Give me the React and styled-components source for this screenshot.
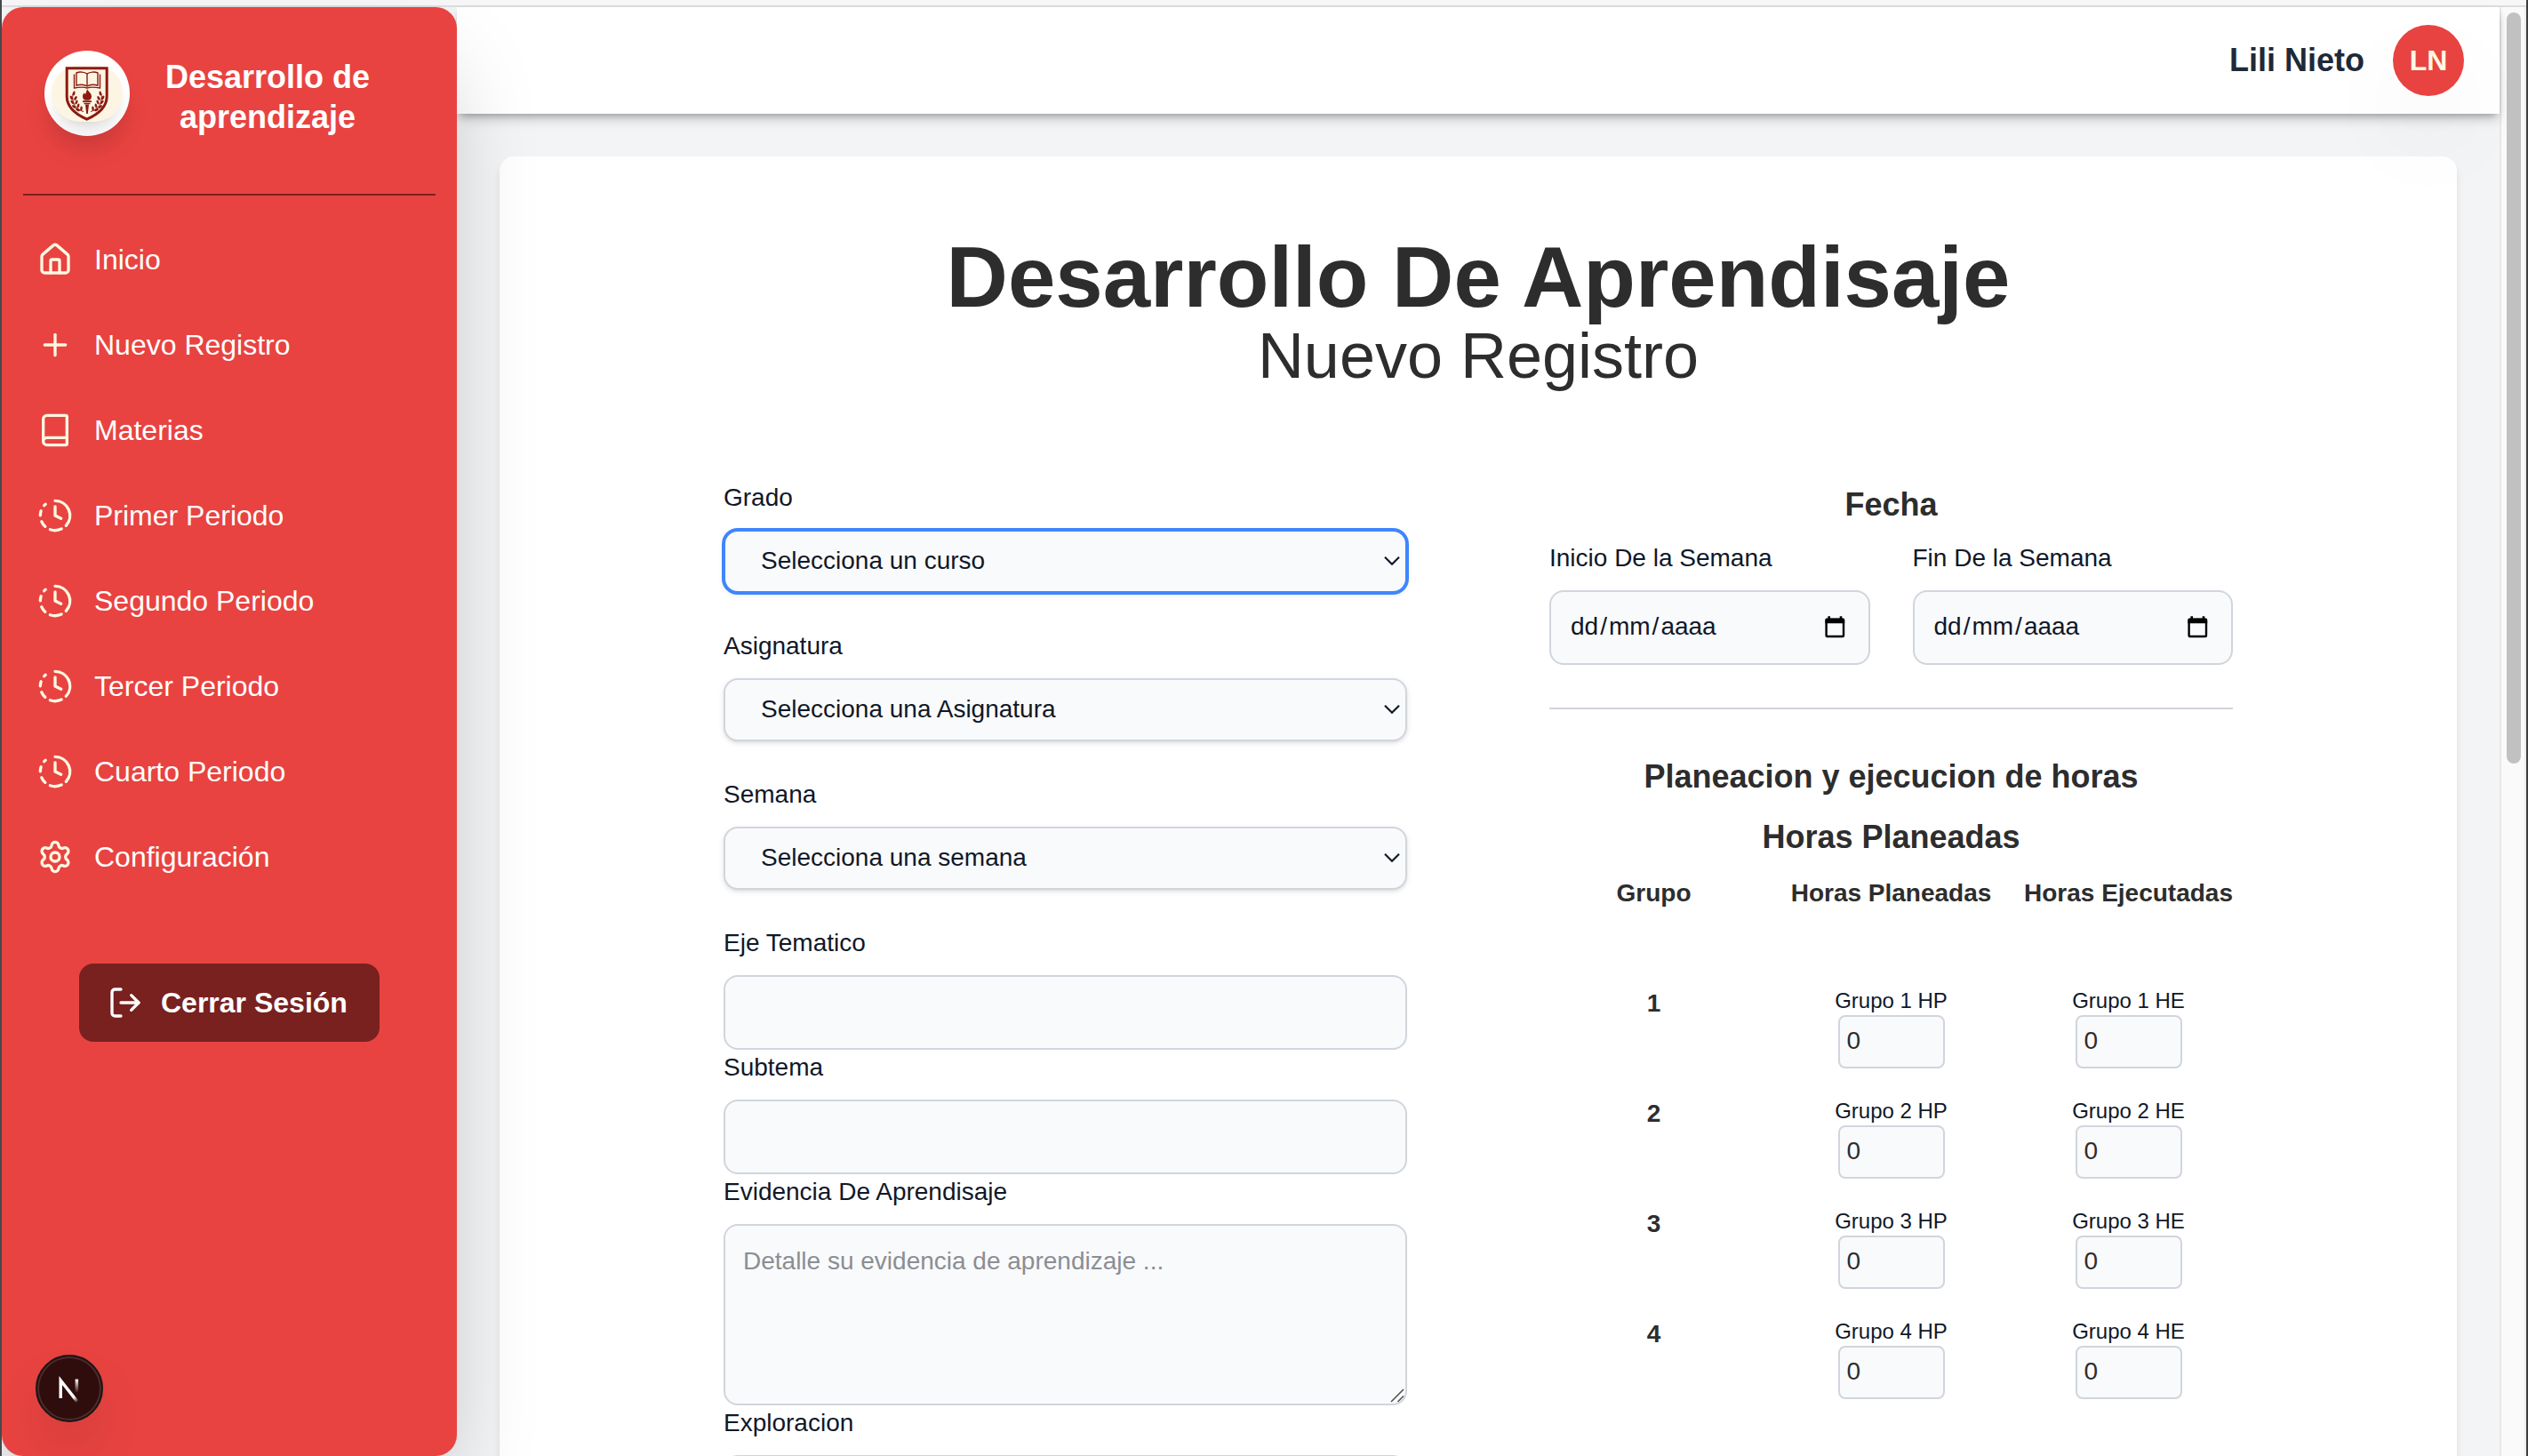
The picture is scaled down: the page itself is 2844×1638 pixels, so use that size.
import React from "react";
import styled, { createGlobalStyle } from "styled-components";
import { House, Plus, Book, ClockFading, Settings, LogOut } from "lucide-react";

const Global = createGlobalStyle`
  *, *::before, *::after { box-sizing: border-box; }
  html, body { margin: 0; padding: 0; }
  body {
    font-family: "Liberation Sans", Arial, Helvetica, sans-serif;
    color: #2d2d2d;
    background: #f3f4f6;
    overflow: hidden;
  }
  h1, h2, h3, p { margin: 0; }
  input, textarea, button { font-family: inherit; }
`;

const Window = styled.div`
  width: 2844px;
  height: 1638px;
  display: flex;
  flex-direction: column;
  overflow: hidden;
  border-left: 2px solid #47484a;
  border-right: 2px solid #3d3d40;
  background: #f3f4f6;
`;

const Toolbar = styled.div`
  flex: none;
  height: 8px;
  background: #f7f7f7;
  border-bottom: 2px solid #dddddd;
`;

const Viewport = styled.div`
  flex: 1;
  min-height: 0;
  display: flex;
`;

const Sidebar = styled.aside`
  position: relative;
  z-index: 3;
  flex: none;
  width: 512px;
  height: 1630px;
  border-radius: 24px;
  background: #e84341;
  box-shadow: 0 50px 100px -24px rgba(0, 0, 0, 0.25);
`;

const Brand = styled.div`
  display: flex;
  align-items: flex-start;
  height: 210px;
  margin: 0 24px;
  padding: 49px 0 0 24px;
`;

const BrandLogo = styled.div`
  flex: none;
  display: flex;
  align-items: center;
  justify-content: center;
  width: 96px;
  height: 96px;
  border-radius: 50%;
  background: #fff;
  box-shadow: 0 20px 30px -6px rgba(0, 0, 0, 0.1);
`;

const Crest = styled.div`
  display: flex;
  align-items: center;
  justify-content: center;
  width: 80px;
  height: 64px;
  border-radius: 32px;
  background: #fdf5e3;
  box-shadow: 0 20px 30px -6px rgba(0, 0, 0, 0.1), 0 8px 12px -8px rgba(0, 0, 0, 0.1);
`;

const BrandName = styled.h2`
  width: 262px;
  margin: 7px 0 0 24px;
  color: #fff;
  font-size: 36px;
  line-height: 45px;
  font-weight: 700;
  text-align: center;
`;

const SidebarRule = styled.div`
  height: 2px;
  margin: 0 24px;
  background: #7a211f;
`;

const Nav = styled.nav`
  display: flex;
  flex-direction: column;
  gap: 16px;
  padding: 32px 24px 0;
`;

const NavItem = styled.a`
  display: flex;
  align-items: center;
  gap: 24px;
  height: 80px;
  padding: 0 16px;
  color: #fff;
  font-size: 32px;
  line-height: 48px;
  svg { color: #fff8e1; }
`;

const LogoutButton = styled.button`
  display: flex;
  align-items: center;
  gap: 20px;
  width: 338px;
  height: 88px;
  margin: 80px auto 0;
  padding: 0 0 0 32px;
  border: 0;
  border-radius: 16px;
  background: #78211f;
  color: #fff;
  font-size: 32px;
  font-weight: 700;
`;

const DevBadge = styled.div`
  position: absolute;
  left: 38px;
  bottom: 38px;
  display: flex;
  align-items: center;
  justify-content: center;
  width: 76px;
  height: 76px;
  border-radius: 50%;
  background: #2e0d0c;
  border: 2px solid #1b1716;
  box-shadow: inset 0 0 0 2px #4e2b2b, 0 32px 64px -16px rgba(0, 0, 0, 0.24);
`;

const Main = styled.div`
  flex: 1;
  min-width: 0;
  display: flex;
  flex-direction: column;
  background: #f3f4f6;
`;

const Header = styled.header`
  position: relative;
  z-index: 2;
  flex: none;
  display: flex;
  align-items: center;
  justify-content: flex-end;
  gap: 32px;
  height: 120px;
  padding: 0 40px;
  background: #fff;
  box-shadow: 0 8px 12px -2px rgba(0, 0, 0, 0.2), 0 4px 8px -4px rgba(0, 0, 0, 0.3);
`;

const UserName = styled.span`
  color: #1e2939;
  font-size: 36px;
  line-height: 56px;
  font-weight: 700;
`;

const Avatar = styled.div`
  display: flex;
  align-items: center;
  justify-content: center;
  width: 80px;
  height: 80px;
  border-radius: 50%;
  background: #e84341;
  color: #fff8e1;
  font-size: 32px;
  font-weight: 700;
  box-shadow: 0 50px 100px -24px rgba(0, 0, 0, 0.25);
`;

const Page = styled.main`
  flex: 1;
  min-height: 0;
  overflow: hidden;
  padding: 48px 48px 0;
`;

const Card = styled.section`
  height: 1800px;
  padding: 88px 252px 0;
  border-radius: 16px;
  background: #fff;
  box-shadow: 0 8px 12px -2px rgba(0, 0, 0, 0.1), 0 4px 8px -4px rgba(0, 0, 0, 0.1);
`;

const Title = styled.h1`
  font-size: 96px;
  line-height: 96px;
  font-weight: 700;
  text-align: center;
  white-space: nowrap;
`;

const Subtitle = styled.p`
  margin-bottom: 100px;
  font-size: 72px;
  line-height: 80px;
  text-align: center;
`;

const Columns = styled.div`
  display: grid;
  grid-template-columns: 1fr 1fr;
  column-gap: 160px;
`;

const Column = styled.div`
  min-width: 0;
`;

const Label = styled.label`
  display: block;
  margin-bottom: 16px;
  color: #101828;
  font-size: 28px;
  line-height: 40px;
`;

const SelectBox = styled.div`
  display: flex;
  align-items: center;
  justify-content: space-between;
  height: 71px;
  margin-bottom: 40px;
  padding: 0 6px 1px 40px;
  border: 2px solid ${(p) => (p.$focused ? "#3f86fc" : "#d1d5dc")};
  border-radius: 16px;
  background: #f9fafb;
  color: #101828;
  font-size: 28px;
  box-shadow: ${(p) => (p.$focused ? "0 0 0 2px #3f86fc, " : "")}0 2px 6px rgba(0, 0, 0, 0.1), 0 2px 4px -2px rgba(0, 0, 0, 0.1);
`;

const TextInput = styled.input`
  display: block;
  width: 100%;
  height: 84px;
  padding: 20px;
  border: 2px solid #d1d5dc;
  border-radius: 16px;
  background: #f9fafb;
  font-size: 28px;
  outline: none;
`;

const TextArea = styled.textarea`
  display: block;
  width: 100%;
  height: 204px;
  padding: 20px;
  border: 2px solid #d1d5dc;
  border-radius: 16px;
  background: #f9fafb;
  font-size: 28px;
  line-height: 40px;
  outline: none;
  resize: none;
  &::placeholder { color: #8b8e94; opacity: 1; }
`;

const TextAreaWrap = styled.div`
  position: relative;
`;

const Grip = styled.svg`
  position: absolute;
  right: 3px;
  bottom: 3px;
`;

const SectionTitle = styled.h3`
  font-size: 36px;
  line-height: 56px;
  font-weight: 700;
  text-align: center;
  margin-bottom: ${(p) => p.$mb || 12}px;
`;

const DateRow = styled.div`
  display: grid;
  grid-template-columns: 1fr 1fr;
  column-gap: 48px;
`;

const DateBox = styled.div`
  display: flex;
  align-items: center;
  justify-content: space-between;
  height: 84px;
  padding: 0 26px 2px 20px;
  border: 2px solid #d1d5dc;
  border-radius: 16px;
  background: #f9fafb;
  color: #101828;
  font-size: 28px;
`;

const DatePart = styled.span`
  padding: 0 2px;
`;

const Rule = styled.div`
  height: 2px;
  margin: 48px 0;
  background: #d1d5dc;
`;

const Hours = styled.div`
  display: grid;
  grid-template-columns: repeat(3, minmax(0, 1fr));
  column-gap: 32px;
  row-gap: 32px;
  justify-items: center;
`;

const HoursHead = styled.div`
  height: 93px;
  font-size: 28px;
  line-height: 40px;
  font-weight: 700;
  white-space: nowrap;
`;

const GroupNumber = styled.div`
  font-size: 28px;
  line-height: 38px;
  font-weight: 700;
`;

const HourField = styled.div`
  display: flex;
  flex-direction: column;
  align-items: center;
  height: 92px;
`;

const HourLabel = styled.label`
  color: #101828;
  font-size: 24px;
  line-height: 32px;
  white-space: nowrap;
`;

const HourInput = styled.input`
  width: 120px;
  height: 60px;
  padding: 0 8px 2px;
  border: 2px solid #d1d5dc;
  border-radius: 8px;
  background: #f9fafb;
  color: #2d2d2d;
  font-size: 28px;
  outline: none;
`;

const ScrollTrack = styled.div`
  flex: none;
  width: 30px;
  padding: 6px 4px 0 6px;
  border-left: 2px solid #e8e8e8;
  border-right: 2px solid #ededed;
  background: #fafafa;
`;

const ScrollThumb = styled.div`
  width: 16px;
  height: 845px;
  border-radius: 8px;
  background: #c1c1c1;
`;

const CrestIcon = () => (
  <svg width="50" height="62" viewBox="0 0 50 62" fill="none" stroke="#8b1a10">
    <path d="M2.2 2.8H47.2V34.500C47.200 46 38.500 54 24.700 60.200C11 54 2.200 46 2.200 34.500Z" strokeWidth="3" />
    <path d="M25 9C22 6.600 16 6.600 13 8V22C17 21 22 21 25 23C28 21 33 21 37 22V8C34 6.600 28 6.600 25 9Z" strokeWidth="1.400" />
    <path d="M25 9V23M10.500 9.500V25C16 24 22 24 25 25C28 24 34 24 39.500 25V9.500" strokeWidth="1.400" />
    <path d="M25 26C26 29 30 30.500 30 34.500C30 37 28.500 38.300 27 38.700H23C21.500 38.300 20 37 20 34.500C20 32.500 21 31.500 21.500 30.500L23 32C24 30 24.500 28 25 26Z" fill="#8b1a10" stroke="none" />
    <path d="M20 40.200H30M21.500 42.500H28.500" strokeWidth="1.700" />
    <path d="M23 43.500H27L25.800 54H24.200Z" fill="#8b1a10" stroke="none" />
    <path d="M9 31C7.500 42 12 49 21 51.500M41 31C42.500 42 38 49 29 51.500" strokeWidth="1" />
    <g fill="#8b1a10" stroke="none">
      {[[10.2, 31, 10], [7.3, 36, -30], [12, 36.5, 30], [8.3, 41, -40], [13, 41, 25], [10.3, 46, -55], [15, 45, 15], [14.5, 49.5, -65], [18.5, 48, 5]].map(([x, y, r], i) => (
        <React.Fragment key={i}>
          <ellipse cx={x} cy={y} rx="1.300" ry="2.600" transform={`rotate(${r} ${x} ${y})`} />
          <ellipse cx={50 - x} cy={y} rx="1.300" ry="2.600" transform={`rotate(${-r} ${50 - x} ${y})`} />
        </React.Fragment>
      ))}
    </g>
  </svg>
);

const DevMark = () => (
  <svg width="76" height="76" viewBox="0 0 76 76" fill="none">
    <defs>
      <linearGradient id="diag" gradientUnits="userSpaceOnUse" x1="37" y1="40" x2="48" y2="54">
        <stop stopColor="#fff" />
        <stop offset="0.6" stopColor="#fff" />
        <stop offset="1" stopColor="#fff" stopOpacity="0" />
      </linearGradient>
      <linearGradient id="stem" gradientUnits="userSpaceOnUse" x1="46" y1="27" x2="46" y2="43">
        <stop stopColor="#fff" />
        <stop offset="1" stopColor="#fff" stopOpacity="0" />
      </linearGradient>
    </defs>
    <path d="M48.500 55L27.700 28.500V49.500" stroke="url(#diag)" strokeWidth="3.700" />
    <path d="M46.800 27V43" stroke="url(#stem)" strokeWidth="3.700" />
  </svg>
);

const Chevron = () => (
  <svg width="18" height="12" viewBox="0 0 18 12" fill="none" stroke="#101828" strokeWidth="2.200">
    <path d="M1 1.800L9 9.800L17 1.800" />
  </svg>
);

const CalendarIcon = () => (
  <svg width="23" height="25" viewBox="0 0 23 25" fill="none">
    <rect x="1.600" y="4" width="19.400" height="19" rx="1" stroke="#000" strokeWidth="2.400" />
    <path d="M0.400 4Q0.400 2.500 2 2.500H20.600Q22.200 2.500 22.200 4V8.300H0.400ZM3.400 0.300H6V3H3.400ZM16.700 0.300H19.300V3H16.700Z" fill="#000" />
  </svg>
);

const NAV = [
  ["Inicio", House],
  ["Nuevo Registro", Plus],
  ["Materias", Book],
  ["Primer Periodo", ClockFading],
  ["Segundo Periodo", ClockFading],
  ["Tercer Periodo", ClockFading],
  ["Cuarto Periodo", ClockFading],
  ["Configuración", Settings],
];

const SELECTS = [
  ["Grado", "Selecciona un curso", true],
  ["Asignatura", "Selecciona una Asignatura", false],
  ["Semana", "Selecciona una semana", false],
];

const DateField = ({ label }) => (
  <div>
    <Label>{label}</Label>
    <DateBox>
      <span>
        <DatePart>dd</DatePart>/<DatePart>mm</DatePart>/<DatePart>aaaa</DatePart>
      </span>
      <CalendarIcon />
    </DateBox>
  </div>
);

export default function App() {
  return (
    <>
      <Global />
      <Window>
        <Toolbar />
        <Viewport>
          <Sidebar>
            <Brand>
              <BrandLogo>
                <Crest>
                  <CrestIcon />
                </Crest>
              </BrandLogo>
              <BrandName>Desarrollo de aprendizaje</BrandName>
            </Brand>
            <SidebarRule />
            <Nav>
              {NAV.map(([text, Icon]) => (
                <NavItem key={text}>
                  <Icon size={40} />
                  {text}
                </NavItem>
              ))}
            </Nav>
            <LogoutButton>
              <LogOut size={40} />
              Cerrar Sesión
            </LogoutButton>
            <DevBadge>
              <DevMark />
            </DevBadge>
          </Sidebar>
          <Main>
            <Header>
              <UserName>Lili Nieto</UserName>
              <Avatar>LN</Avatar>
            </Header>
            <Page>
              <Card>
                <Title>Desarrollo De Aprendisaje</Title>
                <Subtitle>Nuevo Registro</Subtitle>
                <Columns>
                  <Column>
                    {SELECTS.map(([label, value, focused]) => (
                      <div key={label}>
                        <Label>{label}</Label>
                        <SelectBox $focused={focused}>
                          <span>{value}</span>
                          <Chevron />
                        </SelectBox>
                      </div>
                    ))}
                    <Label>Eje Tematico</Label>
                    <TextInput />
                    <Label>Subtema</Label>
                    <TextInput />
                    <Label>Evidencia De Aprendisaje</Label>
                    <TextAreaWrap>
                      <TextArea placeholder="Detalle su evidencia de aprendizaje ..." />
                      <Grip width="16" height="16" viewBox="0 0 16 16" stroke="#555" strokeWidth="1.600">
                        <path d="M1 15L15 1M8.500 15L15 8.500" />
                      </Grip>
                    </TextAreaWrap>
                    <Label>Exploracion</Label>
                    <TextInput />
                  </Column>
                  <Column>
                    <SectionTitle>Fecha</SectionTitle>
                    <DateRow>
                      <DateField label="Inicio De la Semana" />
                      <DateField label="Fin De la Semana" />
                    </DateRow>
                    <Rule />
                    <SectionTitle>Planeacion y ejecucion de horas</SectionTitle>
                    <SectionTitle $mb={15}>Horas Planeadas</SectionTitle>
                    <Hours>
                      <HoursHead>Grupo</HoursHead>
                      <HoursHead>Horas Planeadas</HoursHead>
                      <HoursHead>Horas Ejecutadas</HoursHead>
                      {[1, 2, 3, 4].map((n) => (
                        <React.Fragment key={n}>
                          <GroupNumber>{n}</GroupNumber>
                          <HourField>
                            <HourLabel>Grupo {n} HP</HourLabel>
                            <HourInput defaultValue="0" />
                          </HourField>
                          <HourField>
                            <HourLabel>Grupo {n} HE</HourLabel>
                            <HourInput defaultValue="0" />
                          </HourField>
                        </React.Fragment>
                      ))}
                    </Hours>
                  </Column>
                </Columns>
              </Card>
            </Page>
          </Main>
          <ScrollTrack>
            <ScrollThumb />
          </ScrollTrack>
        </Viewport>
      </Window>
    </>
  );
}
